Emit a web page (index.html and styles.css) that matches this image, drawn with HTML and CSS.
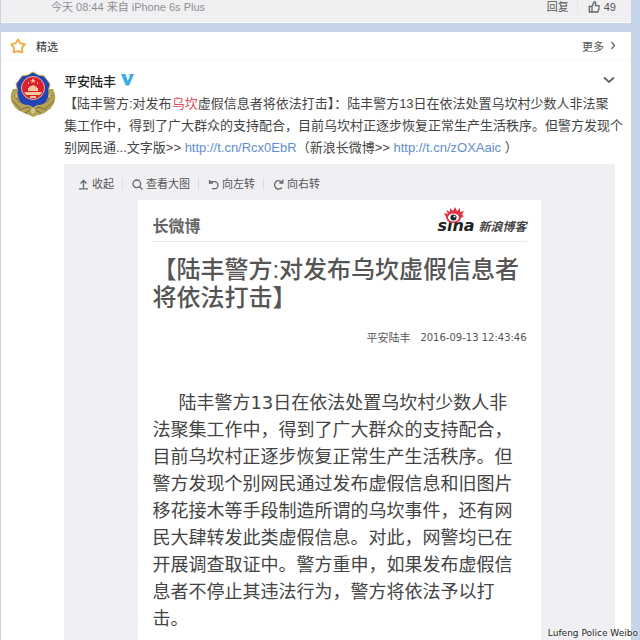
FILE: index.html
```
<!DOCTYPE html>
<html lang="zh-CN">
<head>
<meta charset="UTF-8">
<meta name="viewport" content="width=device-width, initial-scale=1.0">
<title>平安陆丰</title>
<link rel="stylesheet" href="styles.css">
</head>

<body>
  <main>
    <section class="comment">
      <span class="time">今天 08:44 来自 iPhone 6s Plus</span>
      <div class="actions">
        <button>回复</button>
        <button class="like">
          <svg width="12" height="12" viewBox="0 0 12 12"><path d="M4 5.500 6 1h1.200l.6 1.200L7.300 4.600H11v3l-1.200 3.400H4M1.300 5.500H4V11H1.300z"/></svg>
          49
        </button>
      </div>
    </section>

    <section class="card">
      <header class="card-head">
        <svg class="star" width="16" height="16" viewBox="0 0 16 16"><path d="M8 1.500 10.300 5.200 14.700 6.300 12 9.800 12.300 14.200 8 13.200 3.700 14.200 4 9.800 1.300 6.300 5.700 5.200z"/></svg>
        <h2>精选</h2>
        <a class="more" href="#">更多
          <svg width="6" height="9" viewBox="0 0 6 9"><path d="M1.500 1 4.500 4.500 1.500 8"/></svg>
        </a>
      </header>

      <article class="post">
        <svg class="avatar" width="46" height="46" viewBox="0 0 46 46">
          <path fill="#b5a254" d="M3 18C0 23 0 29 3 33q2 5 7 7 6 3 9 4l4 2 5-2q6-1 9-4 5-3 7-8 3-7-1-14z"/>
          <path fill="none" stroke="#776c38" d="M4 24l6 8M2 30l8 7M42 24l-6 8M44 30l-8 7M9 39l9-3 5 4 5-4 9 3M15 42l8-4 8 4"/>
          <path fill="#d3c583" d="m23 35 3 5-3 3-3-3zM6 22l4 6-5-2zM40 22l-4 6 5-2z"/>
          <path fill="#2146b4" stroke="#c3a75d" d="M23 1q5 4 11 4l6 8q-2 5-1 10-1 9-7 11-6 0-9 3-3-3-9-3-6-2-7-11 1-5-1-10l6-8Q18 5 23 1z"/>
          <circle cx="23" cy="17" r="11.500" fill="#db1f2b" stroke="#e7b7a1"/>
          <path fill="#f3c9a0" d="m23 7 1 2h2l-2 1 1 2-2-1-2 1 1-2-2-1h2zM18 11h1v2h-1zM27 11h1v2h-1zM19 16l4-2 4 2v1h1v3H18v-3h1zM14 21h18l-2 3H16zM20 25h6v2h-6z"/>
        </svg>

        <div class="post-main">
          <div class="post-name">
            <a href="#">平安陆丰</a>
            <svg width="13" height="12" viewBox="0 0 13 12"><path fill="#39aee8" d="M0 0h4.500l2.300 7L9 1.800 8 0h5L8.200 11.500H4.800z"/></svg>
            <button class="fold" aria-label="菜单">
              <svg width="12" height="8" viewBox="0 0 12 8"><path d="m1 1.500 5 4.500 5-4.500"/></svg>
            </button>
          </div>

          <p class="post-text">【陆丰警方:对发布<em>乌坎</em>虚假信息者将依法打击】：陆丰警方13日在依法处置乌坎村少数人非法聚<br>集工作中，得到了广大群众的支持配合，目前乌坎村正逐步恢复正常生产生活秩序。但警方发现个<br>别网民通...文字版&gt;&gt; <a href="#">http://t.cn/Rcx0EbR</a>（新浪长微博&gt;&gt; <a href="#">http://t.cn/zOXAaic</a> ）</p>

          <div class="viewer">
            <div class="tools">
              <button><svg width="11" height="11" viewBox="0 0 11 11"><path d="M5.500 9V1.500M2.500 4.500l3-3 3 3M1 9.800h9"/></svg>收起</button>
              <button><svg width="11" height="11" viewBox="0 0 11 11"><circle cx="4.800" cy="4.800" r="3.800"/><path d="m7.500 7.500 3 3"/></svg>查看大图</button>
              <button><svg width="11" height="11" viewBox="0 0 11 11"><path d="M1.500 1v3.200h3.500M1.500 4.200l1.500-1.500h3.500a3.400 3.400 0 0 1 0 7H4"/></svg>向左转</button>
              <button><svg width="11" height="11" viewBox="0 0 11 11"><path d="M9.800.5v3.500H6.300M9.500 4A4.200 4.200 0 1 0 9 8.500"/></svg>向右转</button>
            </div>

            <div class="long-post">
              <div class="long-head">
                <h3>长微博</h3>
                <div class="brand">
                  <span class="sina">sina
                    <svg width="20" height="16" viewBox="0 0 20 16">
                      <path fill="#e03245" d="M2 10 0 6l4 1-2-4 4 2 0-4 3 3 2-4 2 4 3-3v4l4-1-2 4 2 1-3 2q-1 5-8 5-6 0-7-6z"/>
                      <ellipse cx="9.500" cy="10.500" rx="5.500" ry="4" fill="#fff"/>
                      <circle cx="9.500" cy="10.500" r="3" fill="#222"/>
                      <circle cx="10.500" cy="9.500" r="1" fill="#fff"/>
                    </svg>
                  </span>
                  <span class="blog">新浪博客</span>
                </div>
              </div>
              <h1>【陆丰警方:对发布乌坎虚假信息者<br>将依法打击】</h1>
              <p class="date"><span>平安陆丰</span><time>2016-09-13 12:43:46</time></p>
              <p class="long-text">陆丰警方13日在依法处置乌坎村少数人非<br>法聚集工作中，得到了广大群众的支持配合，<br>目前乌坎村正逐步恢复正常生产生活秩序。但<br>警方发现个别网民通过发布虚假信息和旧图片<br>移花接木等手段制造所谓的乌坎事件，还有网<br>民大肆转发此类虚假信息。对此，网警均已在<br>开展调查取证中。警方重申，如果发布虚假信<br>息者不停止其违法行为，警方将依法予以打<br>击。</p>
            </div>
          </div>
        </div>
      </article>
    </section>
  </main>
  <div class="credit">Lufeng Police Weibo</div>
</body>
</html>
```
FILE: styles.css
```
* {
  box-sizing: border-box;
}

body {
  margin: 0;
  height: 100vh;
  overflow: hidden;
  position: relative;
  background: #c5d4e9;
  font-family: "Liberation Sans", "Noto Sans CJK SC", sans-serif;
  font-size: 11px;
  color: #555;
}

h1, h2, h3, p {
  margin: 0;
  font-weight: normal;
}

button {
  display: flex;
  align-items: center;
  padding: 0;
  border: none;
  background: none;
  font: inherit;
  color: inherit;
  cursor: pointer;
}

a {
  color: inherit;
  text-decoration: none;
}

svg {
  flex: none;
}

button svg, .more svg, .star {
  fill: none;
  stroke: #666;
  stroke-width: 1.3;
}

main {
  display: flex;
  flex-direction: column;
  gap: 9px;
  height: 100%;
  margin: 0 9px 0 1px;
}

.comment {
  display: flex;
  justify-content: space-between;
  height: 23px;
  padding: 0 15px 0 50px;
  line-height: 14px;
  background: #f0f0f3;
  border-bottom: 1px solid #f8f9fb;
}

.time {
  color: #8e8e92;
}

.actions {
  display: flex;
  align-items: flex-start;
}

.like {
  gap: 4px;
  margin-left: 8px;
  padding-left: 10px;
  border-left: 1px solid #e4e4e8;
}

.card {
  flex: 1;
  display: flex;
  flex-direction: column;
  background: #fff;
}

.card-head {
  display: flex;
  align-items: center;
  height: 28px;
  padding: 0 15px 0 9px;
  border-bottom: 1px solid #f7f7f8;
}

.card-head .star {
  stroke: #eeb04f;
  stroke-width: 2;
  stroke-linejoin: round;
}

.card-head h2 {
  margin-left: 10px;
  font-size: 11px;
  color: #333;
}

.more {
  display: flex;
  align-items: center;
  gap: 6px;
  margin-left: auto;
}

.post {
  flex: 1;
  display: flex;
  gap: 8px;
  padding: 11px 16px 0 9px;
}

.post-main {
  flex: 1;
  min-width: 0;
  display: flex;
  flex-direction: column;
}

.post-name {
  display: flex;
  align-items: center;
  gap: 5px;
  height: 18px;
  font-size: 13px;
  font-weight: 500;
  color: #222;
}

.fold {
  margin-left: auto;
}

.fold svg {
  stroke-width: 2;
}

.post-text {
  font-size: 13px;
  line-height: 22px;
  padding: 4px 0 5px;
  white-space: nowrap;
  color: #444;
}

.post-text em {
  font-style: normal;
  color: #dd4a60;
}

.post-text a {
  color: #628fce;
}

.viewer {
  flex: 1;
  display: flex;
  flex-direction: column;
  background: #f0f0f4;
}

.tools {
  display: flex;
  align-items: center;
  height: 36px;
  padding: 4px 0 0 14px;
}

.tools button {
  gap: 3px;
  line-height: 12px;
  padding-right: 8px;
}

.tools button + button {
  padding-left: 9px;
  border-left: 1px solid #dcdce0;
}

.long-post {
  flex: 1;
  width: 73%;
  margin: 0 auto;
  padding: 0 14px;
  background: #fff;
}

.long-head {
  display: flex;
  justify-content: space-between;
  align-items: center;
  height: 42px;
  padding-top: 9px;
  border-bottom: 1px solid #ececee;
}

.long-head h3 {
  font-size: 16px;
  font-weight: bold;
  color: #666;
}

.brand {
  display: flex;
  align-items: center;
  gap: 4px;
  font-weight: bold;
  font-style: italic;
  color: #222;
}

.sina {
  position: relative;
  font-family: "DejaVu Sans", sans-serif;
  font-size: 16px;
}

.sina svg {
  position: absolute;
  left: 7px;
  top: -9px;
}

.blog {
  font-size: 12px;
  color: #444;
}

.long-post h1 {
  padding-top: 14px;
  font-size: 24px;
  font-weight: 500;
  line-height: 28px;
  white-space: nowrap;
  color: #555;
}

.date {
  display: flex;
  justify-content: flex-end;
  align-items: center;
  gap: 10px;
  padding-top: 18px;
  line-height: 16px;
  color: #555;
}

.date time {
  font-family: "DejaVu Sans", sans-serif;
  font-size: 10px;
}

.long-text {
  padding-top: 43px;
  font-family: "DejaVu Sans", "Noto Sans CJK SC", sans-serif;
  font-size: 18px;
  line-height: 27px;
  text-indent: 26px;
  white-space: nowrap;
  color: #444;
}

.credit {
  position: absolute;
  right: 2px;
  bottom: 1px;
  font-family: "DejaVu Sans", sans-serif;
  font-size: 9px;
  line-height: 12px;
  color: #222;
  text-shadow: 0 0 2px #fff, 0 0 2px #fff;
}
```
